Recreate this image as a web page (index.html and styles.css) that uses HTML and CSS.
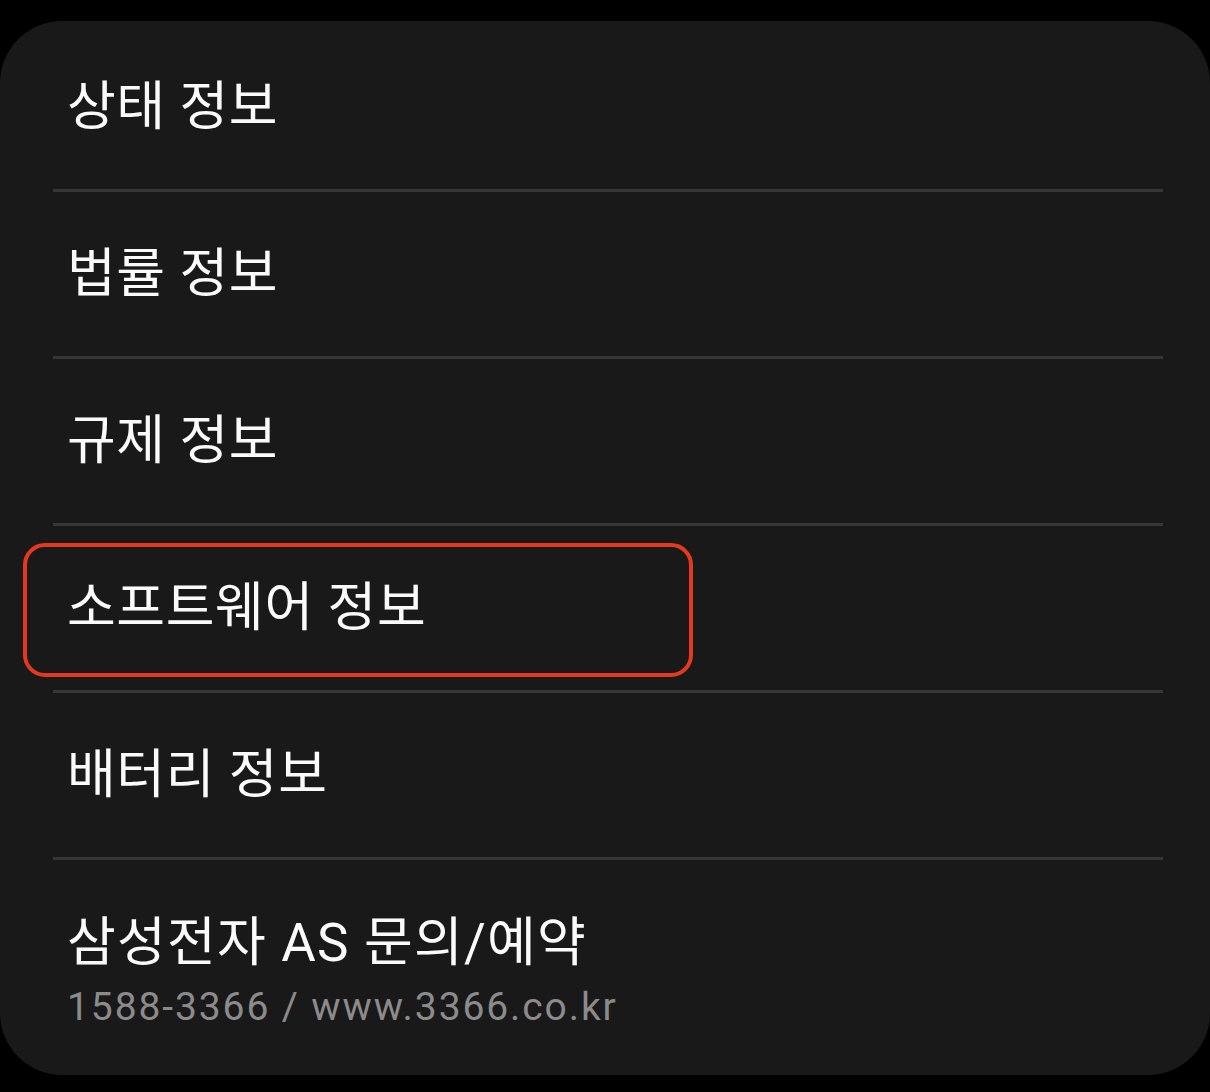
FILE: index.html
```html
<!DOCTYPE html>
<html lang="ko">
<head>
    <meta charset="UTF-8">
    <meta name="viewport" content="width=device-width, initial-scale=1.0">
    <title>휴대전화 정보</title>
    <link rel="stylesheet" href="styles.css">
</head>
<body>
    <div class="card">
        <ul class="menu">
            <li class="menu-item"><span class="title">상태 정보</span></li>
            <li class="menu-item"><span class="title">법률 정보</span></li>
            <li class="menu-item"><span class="title">규제 정보</span></li>
            <li class="menu-item highlighted">
                <span class="title">소프트웨어 정보</span>
                <div class="highlight-box"></div>
            </li>
            <li class="menu-item"><span class="title">배터리 정보</span></li>
            <li class="menu-item last">
                <span class="title">삼성전자 AS 문의/예약</span>
                <span class="subtitle">1588-3366 / www.3366.co.kr</span>
            </li>
        </ul>
    </div>
</body>
</html>
```

FILE: styles.css
```css
body {
    margin: 0;
    background-color: #000;
    font-family: Roboto, "Noto Sans CJK KR", sans-serif;
}
.card {
    margin-top: 21px;
    height: 1054px;
    box-sizing: border-box;
    padding-top: 4px;
    background-color: #191919;
    border-radius: 62px;
    overflow: hidden;
}
.menu {
    list-style: none;
    margin: 0 47px 0 53px;
    padding: 0;
    display: flex;
    flex-direction: column;
    height: 100%;
}
.menu-item {
    position: relative;
    height: 164px;
    border-bottom: 3px solid #363636;
    display: flex;
    flex-direction: column;
    justify-content: center;
    padding-left: 14px;
}
.menu-item.last {
    flex: 1;
    border-bottom: none;
    padding-top: 10px;
}
.title {
    color: #fafafa;
    font-size: 53px;
    line-height: 60px;
    letter-spacing: 0.6px;
}
.last .title {
    letter-spacing: 1.2px;
}
.subtitle {
    margin-top: 8px;
    color: #8b8b8b;
    font-size: 39px;
    line-height: 52px;
    letter-spacing: 1.9px;
}
.highlight-box {
    position: absolute;
    left: -30px;
    top: 17px;
    width: 670px;
    height: 134px;
    box-sizing: border-box;
    border: 4px solid #e5391f;
    border-radius: 22px;
}
```
